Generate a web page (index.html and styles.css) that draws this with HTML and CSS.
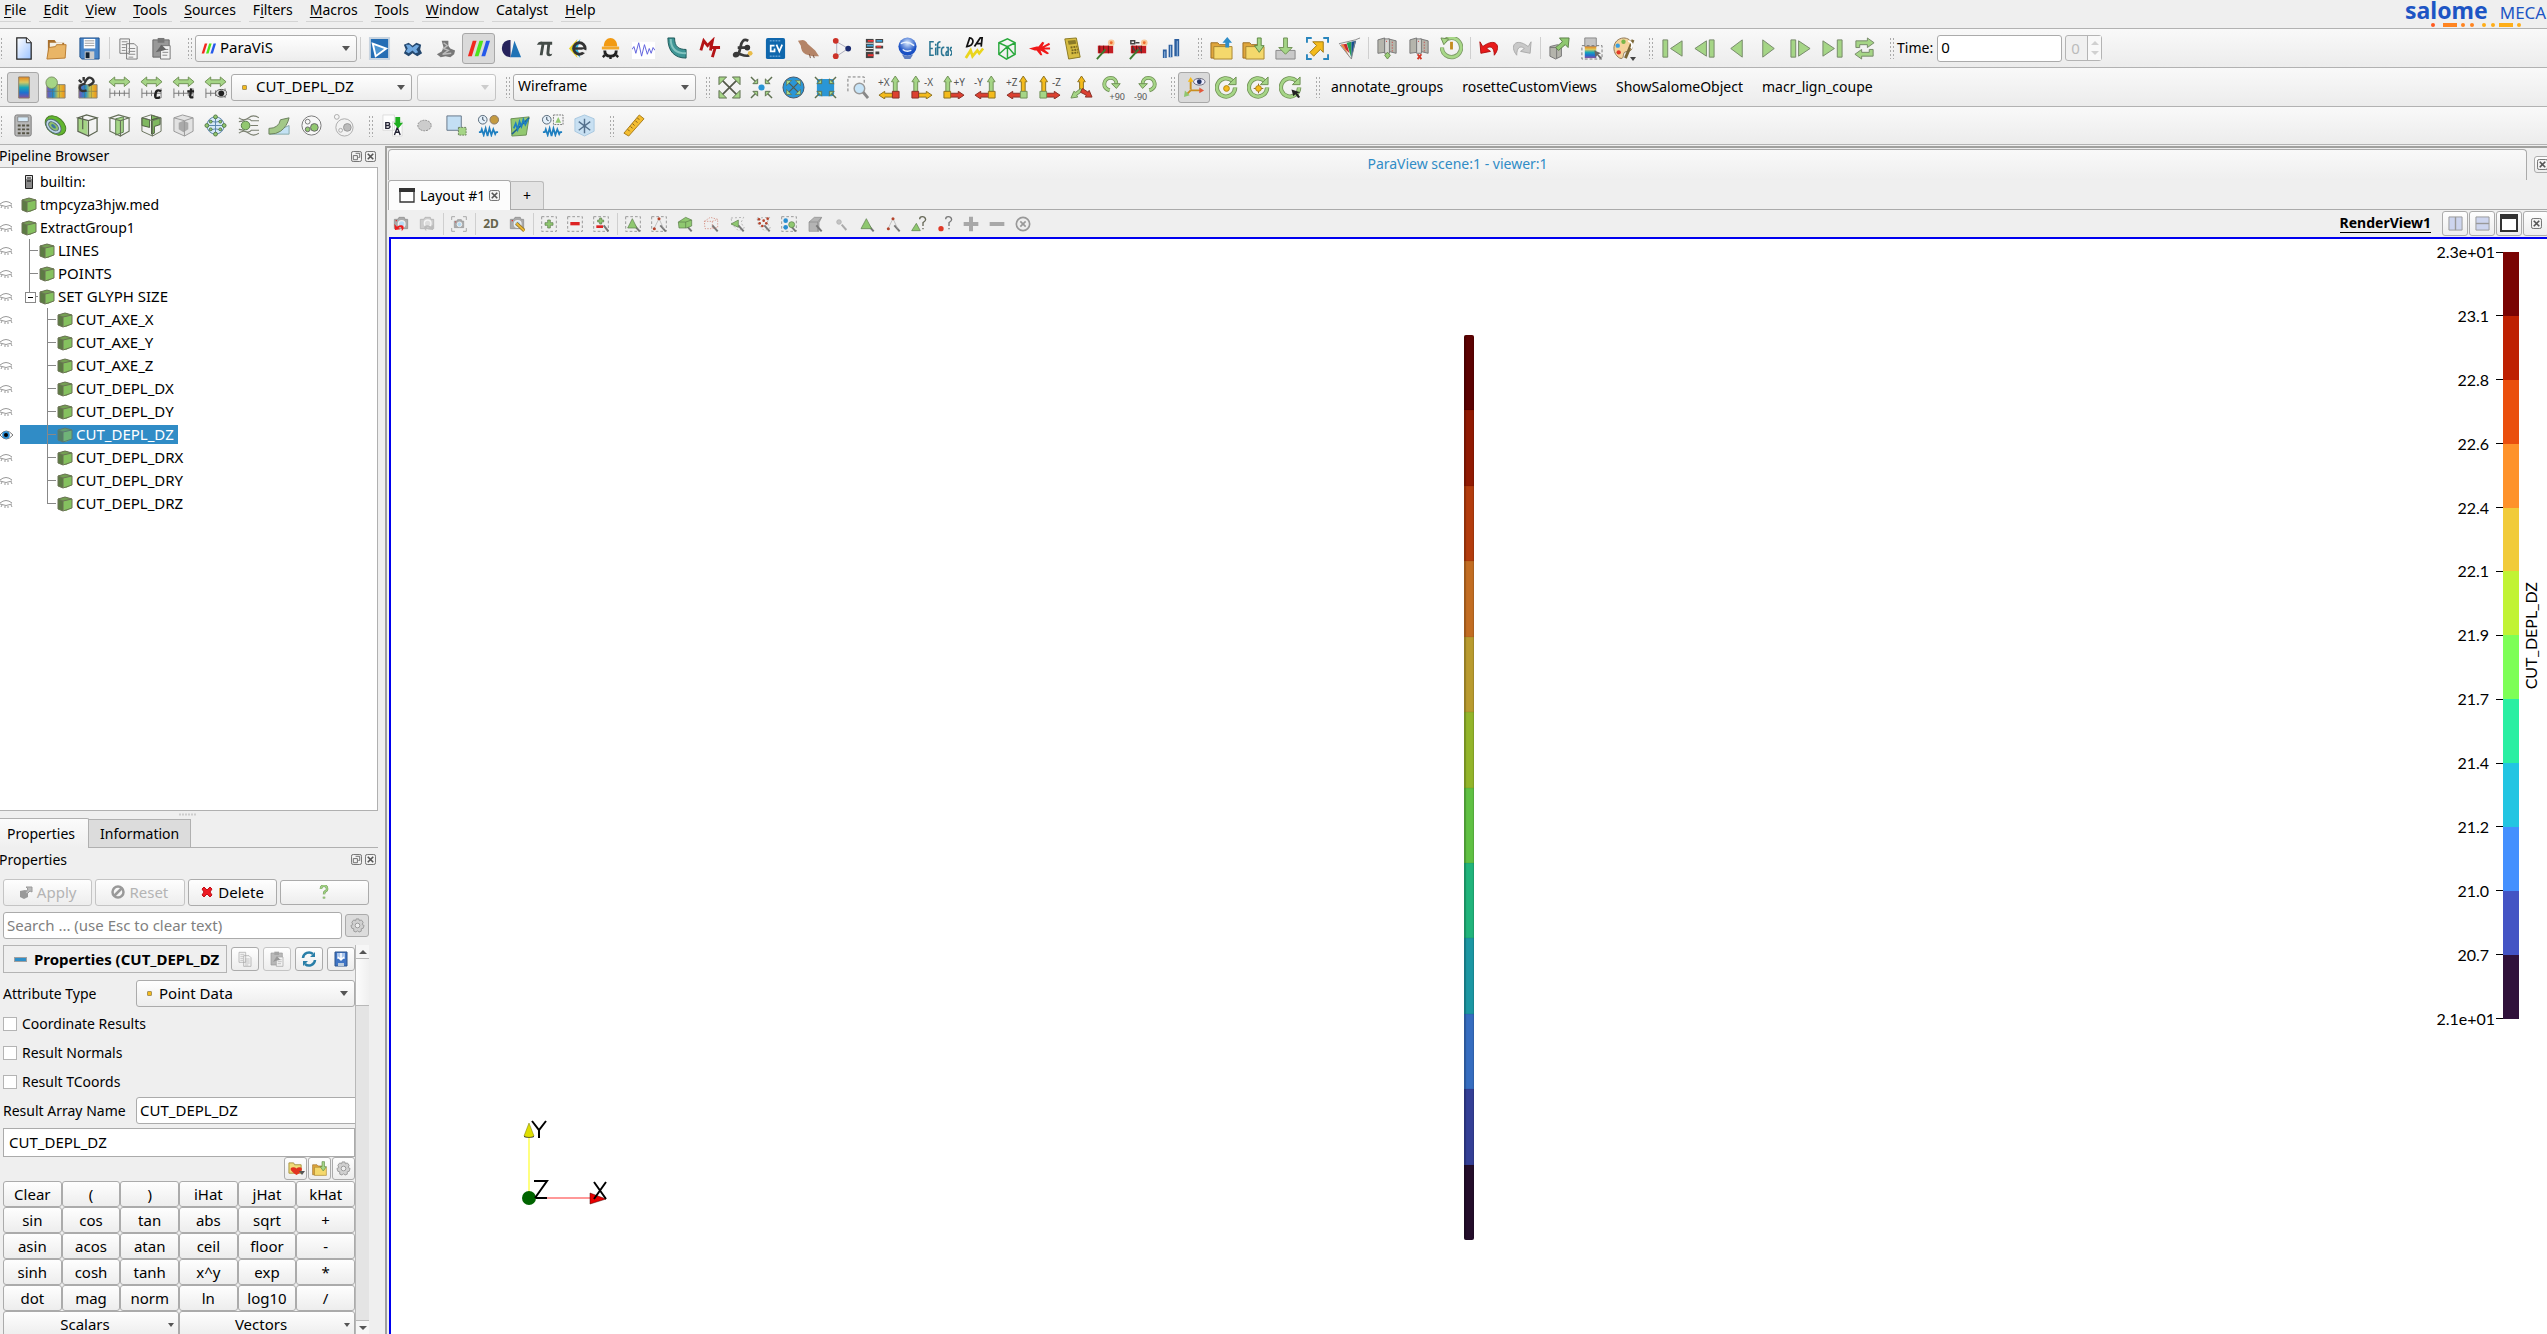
FILE: index.html
```html
<!DOCTYPE html>
<html lang="en">
<head>
<meta charset="utf-8">
<title>SALOME MECA - ParaViS</title>
<link rel="stylesheet" href="styles.css">
</head>
<body>
<svg class="defs" aria-hidden="true">
<defs>
<linearGradient id="rain" x1="0" y1="0" x2="0" y2="1"><stop offset="0" stop-color="#e8861c"/><stop offset=".25" stop-color="#d8c860"/><stop offset=".5" stop-color="#18a8b8"/><stop offset=".75" stop-color="#1f6fd0"/><stop offset="1" stop-color="#8a4f9c"/></linearGradient>
<linearGradient id="rainh"><stop offset="0" stop-color="#7b55b0"/><stop offset=".35" stop-color="#1c8fd0"/><stop offset=".65" stop-color="#d8c840"/><stop offset="1" stop-color="#f09018"/></linearGradient>
<linearGradient id="sheet" x1="0" y1="0" x2="1" y2="1"><stop offset="0" stop-color="#fff"/><stop offset="1" stop-color="#9cc3ff"/></linearGradient>
<radialGradient id="ball" cx=".5" cy=".3"><stop offset="0" stop-color="#dcecff"/><stop offset="1" stop-color="#1b51c4"/></radialGradient>
<symbol id="new" viewBox="0 0 24 24"><path d="M5 1h10l5 5v17H5z" fill="url(#sheet)" stroke="#222" stroke-width="1.3"/><path d="M15 1v5h5" fill="#fff" stroke="#222"/></symbol>
<symbol id="open" viewBox="0 0 24 24"><path d="M3 3h7l2 3h8v15H3z" fill="#a86f2c"/><path d="M5 6h13v6H5z" fill="#f4f0e6"/><path d="M2 23 4 11l7-1 1-2h10l-1 14z" fill="#e9b566" stroke="#b87b30"/></symbol>
<symbol id="save" viewBox="0 0 24 24"><path d="M2 1h20v22H4l-2-2z" fill="#4a86c8" stroke="#1d4f8c"/><path d="M6 2h12v10H6z" fill="#fff"/><path d="M7 4h10M7 6.500h10M7 9h10" stroke="#999"/><path d="M7 15h10v8H7z" fill="#ccc"/><path d="M8 16h4v6H8z" fill="#123"/></symbol>
<symbol id="copy" viewBox="0 0 24 24"><path d="M3 2h10v15H3zM10 7h8l3 3v13H10z" fill="#f4f4f4" stroke="#777"/><path d="M5 5h6M5 8h5M5 11h4M5 14h4M12 12h7M12 15h7M12 18h7M12 21h5" stroke="#888"/></symbol>
<symbol id="paste" viewBox="0 0 24 24"><path d="M3 3h17v18H3z" fill="#999" stroke="#666"/><path d="M8 1h7v5H8z" fill="#777"/><path d="M11 9h10v14H11z" fill="#f2f2f2" stroke="#777"/><path d="M13 13h6M13 16h6M13 19h5" stroke="#888"/><path d="m6 16 6-8 5 5-3 1z" fill="#666"/></symbol>
<symbol id="pv" viewBox="0 0 24 24"><path d="M6 4h4L5 20H1z" fill="#f2281e"/><path d="M13 4h4l-5 16H8z" fill="#4ee41c"/><path d="M20 4h4l-5 16h-4z" fill="#2459ea"/></symbol>
<symbol id="shaper" viewBox="0 0 24 24"><path d="M2 1h20v22H2z" fill="#246db4" stroke="#c8d4e0" stroke-width="2"/><path d="m5 7 14 5-11 8z" fill="#4c94d0" stroke="#fff" stroke-width="2"/></symbol>
<symbol id="geom" viewBox="0 0 24 24"><path d="m3 8 5-2 4 3 4-3 5 2-1 5 2 4-5 3-5-3-4 3-5-3 2-4z" fill="#24486f"/><path d="m5 8 4 0 3 3 4-3 3 1-3 4 2 3-3 1-3-3-4 3-3-2 2-3z" fill="#71a9e0"/></symbol>
<symbol id="mesh" viewBox="0 0 24 24"><path d="M8 4h7v5l2 3 5 2-1 4-4 3-5-1-5 1-4-3 5-3 2-4z" fill="#777"/><path d="m10 6 4 3-4 3 5 2-6 4 9-1" fill="none" stroke="#bbb" stroke-width="1.500"/></symbol>
<symbol id="adao" viewBox="0 0 24 24"><path d="M11 3C4 3 2 8 2 12s3 9 9 9z" fill="#26235c"/><path d="m15 4 7 17H11z" fill="#1f72b6"/></symbol>
<symbol id="pi" viewBox="0 0 24 24"><path d="M4 8q2-4 6-3h10v3H4zM9 7h3l-2 12H7zM15 7h3l-1 10q2 2 3 0 0 3-3 3-3 0-3-3z" fill="#444c48"/></symbol>
<symbol id="eicon" viewBox="0 0 24 24"><path d="M12 2 3 12l9 10-3-10z" fill="#e8d424"/><path d="M15 2 6 12l9 10-3-10z" fill="#2fb4dc"/><circle cx="14" cy="12" r="6" fill="none" stroke="#333" stroke-width="3"/><path d="M9 12h10" stroke="#333" stroke-width="2.500"/><path d="m17 14 5 2" stroke="#eee" stroke-width="3"/></symbol>
<symbol id="helmet" viewBox="0 0 24 24"><path d="M5 10c0-12 14-12 14 0z" fill="#f29a12"/><path d="M3 10h18v3H3z" fill="#f2a72a"/><path d="M6 14q0 6 6 6t6-6" fill="none" stroke="#222" stroke-width="3"/><path d="M12 20v3M6 19l-2 2M18 19l2 2" stroke="#222" stroke-width="2.500"/></symbol>
<symbol id="wave" viewBox="0 0 24 24"><path d="M0 5h24v18H0z" fill="#fff"/><path d="M0 13l2-3 2 7 3-11 3 14 3-12 3 10 2-6 2 5 2-6 2 3" fill="none" stroke="#5d5fdc"/></symbol>
<symbol id="pipe" viewBox="0 0 24 24"><path d="M3 1h7c0 9 4 12 12 12v9C10 22 3 15 3 1z" fill="#3f9696" stroke="#1c5758"/><path d="M6 2c0 10 6 15 16 15" fill="none" stroke="#83c4c0" stroke-width="2"/></symbol>
<symbol id="mt" viewBox="0 0 24 24"><path d="M3 14 6 4l4 5 5-5-2 10M12 11h11M18 11l-3 10" fill="none" stroke="#b41316" stroke-width="3"/></symbol>
<symbol id="lscript" viewBox="0 0 24 24"><path d="M18 4c-5-3-7 1-8 6s-2 10-5 10-2-4 2-3 8 4 12 2M7 11h8" fill="none" stroke="#3a3a3a" stroke-width="2.800"/><circle cx="17" cy="11" r="3" fill="#333"/><circle cx="20" cy="17" r="2.500" fill="#e9bc4a"/></symbol>
<symbol id="gv" viewBox="0 0 24 24"><rect x="2" y="1" width="20" height="22" rx="2" fill="#0f67ad"/><path d="M11 9H7v6h4v-3M13 8l3 7 3-7" fill="none" stroke="#fff" stroke-width="1.800"/><path d="M6 4h12M6 20h12" stroke="#8fc0e8" stroke-dasharray="2 1"/></symbol>
<symbol id="bird" viewBox="0 0 24 24"><path d="m1 4 5-1q4 1 5 4l8 7 4 6h-7l-7-2q-5-3-5-9z" fill="#b48467"/><path d="m13 18 1 4M17 19l1 3" stroke="#76513d"/></symbol>
<symbol id="graph" viewBox="0 0 24 24"><path d="m7 5 12 7-12 8M7 5v15" fill="none" stroke="#aab"/><circle cx="6" cy="4" r="3" fill="#cc3228"/><circle cx="6" cy="20" r="3" fill="#cc3228"/><circle cx="19" cy="12" r="3" fill="#1c2c70"/></symbol>
<symbol id="blocks" viewBox="0 0 24 24"><path d="M3 2h8v20H3z" fill="#444"/><path d="M13 2h8v4h-8zM13 9h8v3h-8zM13 15h4v3h-4z" fill="#444"/><path d="M5 4h6M5 19h6M14 10h5" stroke="#e33" stroke-width="2"/><path d="M4 9h7M14 4h6" stroke="#3aa6dd" stroke-width="2"/><path d="M3 6.500h8M3 12h8M3 15h8" stroke="#eee"/></symbol>
<symbol id="sphere" viewBox="0 0 24 24"><circle cx="12" cy="10" r="9.500" fill="url(#ball)"/><path d="m6 18 3 5h6l3-5q-6 3-12 0z" fill="#5e7ec0"/><path d="M5 7q7-4 14 2M7 13q4 3 9 1" fill="none" stroke="#eaf3ff" stroke-width="1.500"/></symbol>
<symbol id="eficas" viewBox="0 0 24 24"><path d="M5 5H1v14h4M1 12h3M7 19v-8M7 7v2M9 19V8q0-3 3-3M8 11h4M16 11q-3-1-3 4t3 4M18 11h2v8h-2q-1-4 2-4M24 11h-1q-2 3 1 4 0 4-2 4" fill="none" stroke="#2a7592" stroke-width="1.600"/></symbol>
<symbol id="da" viewBox="0 0 24 24"><path d="m5 10 3-9c5 0 5 8-3 9zM13 10l6-9h2l-1 9M15 7h5" fill="none" stroke="#111" stroke-width="1.800"/><path d="m4 22 5-8 2 6 5-6 2 3 4-5" fill="none" stroke="#ead51c" stroke-width="2.800"/></symbol>
<symbol id="gcube" viewBox="0 0 24 24"><path d="m4 6 9-4 8 4v12l-9 5-8-5zM4 6l9 4 8-4M13 10v13M4 18l9-8 7 8" fill="none" stroke="#27a83a" stroke-width="1.500"/></symbol>
<symbol id="lobster" viewBox="0 0 24 24"><path d="m1 12 8-2 2 0 4-5 2 1-2 4 7-4 1 2-6 3 6 0v2l-6 0 5 4-2 1-7-4 2 5-2 0-4-5-2 0z" fill="#f01818"/></symbol>
<symbol id="goldcalc" viewBox="0 0 24 24"><path d="m4 2 12-1 4 20-12 2z" fill="#d6bc42" stroke="#8a7820"/><path d="m7 4 8-1 1 4-8 1z" fill="#8a7a28"/><path d="m10 11 7-1M11 14l7-1M11 17l7-1" stroke="#75651e" stroke-width="2" stroke-dasharray="2 1"/></symbol>
<symbol id="redtool" viewBox="0 0 24 24"><path d="M4 9h16v8H4z" fill="#c41e24"/><path d="M6 9v8M10 9v8M15 9v8" stroke="#6c1010"/><path d="m3 23 9-10" stroke="#3c7a2e" stroke-width="2"/><circle cx="18" cy="6" r="3.500" fill="#f8c898"/><circle cx="18" cy="6" r="1.500" fill="#f06a2c"/></symbol>
<symbol id="redtool2" viewBox="0 0 24 24"><use href="#redtool"/><path d="M4 4h4v3H4zM9 6h4M6 11l3 4M12 10l3 5" fill="none" stroke="#444" stroke-width="1.500"/></symbol>
<symbol id="bars" viewBox="0 0 24 24"><path d="M3 13h4v9H3zM9 8h4v13H9zM15 2h5v18h-5z" fill="#2c5f9f"/><path d="M5 22v-7M11 21V9M18 20V4" stroke="#9ec0e6"/></symbol>
<symbol id="folderup" viewBox="0 0 24 24"><path d="M1 6h7l2 2h9v14H1z" fill="#e0a63c" stroke="#9a6c20"/><path d="M4 10h19v13H4z" fill="#f4d86c" stroke="#a88430"/><path d="m18 0 5 6h-3v5h-4V6h-3z" fill="#2f8dc8"/></symbol>
<symbol id="folderdn" viewBox="0 0 24 24"><path d="M1 6h7l2 2h9v14H1z" fill="#e0a63c" stroke="#9a6c20"/><path d="M4 10h19v13H4z" fill="#f4d86c" stroke="#a88430"/><path d="M16 1h4v8h3l-5 7-5-7h3z" fill="#a5d586" stroke="#5d8844"/></symbol>
<symbol id="savedn" viewBox="0 0 24 24"><path d="M2 14h20v9H2z" fill="#c9c9c9" stroke="#888"/><path d="M10 1h4v10h5l-7 7-7-7h5z" fill="#a5d586" stroke="#6f8f55"/></symbol>
<symbol id="expand" viewBox="0 0 24 24"><path d="M1 6V1h5M18 1h5v5M23 18v5h-5M6 23H1v-5" fill="none" stroke="#2a86bd" stroke-width="2"/><path d="m7 5 11 0 0 11-3-3-7 7-4-4 7-7z" fill="#f4bb1c" stroke="#a07810"/></symbol>
<symbol id="vcr" viewBox="0 0 24 24"><path d="m3 8 6-1 3 10z" fill="#c82832"/><path d="m3 8 3 0 6 13z" fill="#e84"/><path d="m9 6 5-1v17z" fill="#27a052"/><path d="m14 5 5-1-5 18z" fill="#174f8f"/><path d="m1 7 17-4 5-2M18 4l-4 19L2 8" fill="none" stroke="#888"/></symbol>
<symbol id="server" viewBox="0 0 24 24"><path d="m2 3 7-2v15l-7 1zM13 2l8 2v13l-8-2z" fill="#b5b5ac" stroke="#777"/><path d="M9 2h5v15H9z" fill="#d8d8d4" stroke="#777"/><path d="M17 5v11M11 4v2" stroke="#c33" stroke-dasharray="1 2"/></symbol>
<symbol id="connect" viewBox="0 0 24 24"><use href="#server"/><path d="m12 16 3 3-3 4-3-4z" fill="#9bce7a" stroke="#688e4e"/></symbol>
<symbol id="disconnect" viewBox="0 0 24 24"><use href="#server"/><path d="m10 18 4 5m0-5-4 5" stroke="#d43a2a" stroke-width="2"/></symbol>
<symbol id="clockg" viewBox="0 0 24 24"><path d="M4 5a10 10 0 1 1-2 6" fill="none" stroke="#7e9b68" stroke-width="4.500"/><path d="M4 5a10 10 0 1 1-2 6" fill="none" stroke="#a8d888" stroke-width="2.800"/><path d="m1 1 8 1-5 6z" fill="#a8d888" stroke="#6f8f55"/><path d="M12 5v8" stroke="#c48c20" stroke-width="3"/></symbol>
<symbol id="undo" viewBox="0 0 24 24"><path d="m2 5 1 12 10-2-4-3c5-4 8 0 8 7 8-10 1-19-12-9z" fill="#e81a1a" stroke="#b01010"/></symbol>
<symbol id="redo" viewBox="0 0 24 24"><path d="m22 5-1 12-10-2 4-3c-5-4-8 0-8 7C-1 9 6 0 19 10z" fill="#c9c9c9" stroke="#aaa"/></symbol>
<symbol id="gcubearrow" viewBox="0 0 24 24"><path d="m2 10 8-2 4 2v10l-6 3-6-3z" fill="#b4b4ac" stroke="#777"/><path d="M2 11h7v11M9 12l5-2" fill="none" stroke="#777"/><path d="M12 1h10l-1 10-3-3-7 6-3-3 7-6z" fill="#8fc870" stroke="#5c7e48"/></symbol>
<symbol id="cmapsel" viewBox="0 0 24 24"><path d="M5 1h12v9H5z" fill="#c4c4c4" stroke="#888"/><path d="M5 10h12v12H5z" fill="url(#rain)"/><path d="M2 9h21v14H2z" fill="none" stroke="#777" stroke-dasharray="3 2"/><path d="m15 14 7 3-3 1 4 4-2 1-3-4-2 2z" fill="#666"/></symbol>
<symbol id="palette" viewBox="0 0 24 24"><path d="M12 1C0 2-1 17 8 22c5 2 3-4 5-6 4-2 8 0 8-6 0-7-5-9-9-9z" fill="#f5d39b" stroke="#8a7350"/><circle cx="6" cy="9" r="2.300" fill="#3a9fe0"/><circle cx="12" cy="5" r="2.300" fill="#7ab648"/><circle cx="7" cy="16" r="2.300" fill="#e23a28"/><path d="m22 3-8 19" stroke="#7b6636" stroke-width="3"/><path d="M17 4q6 2 3 8" fill="none" stroke="#fff" stroke-width="2"/></symbol>
<symbol id="first" viewBox="0 0 24 24"><path d="M2 3h5v18H2zM22 4v16L10 12z" fill="#a5d586" stroke="#758868"/></symbol>
<symbol id="prev" viewBox="0 0 24 24"><path d="M17 3h5v18h-5zM14 4v16L2 12z" fill="#a5d586" stroke="#758868"/></symbol>
<symbol id="rev" viewBox="0 0 24 24"><path d="M18 3v18L6 12z" fill="#a5d586" stroke="#758868"/></symbol>
<symbol id="play" viewBox="0 0 24 24"><path d="M6 3v18l12-9z" fill="#a5d586" stroke="#758868"/></symbol>
<symbol id="next" viewBox="0 0 24 24"><path d="M2 3h5v18H2zM10 4v16l12-8z" fill="#a5d586" stroke="#758868"/></symbol>
<symbol id="last" viewBox="0 0 24 24"><path d="M17 3h5v18h-5zM2 4v16l12-8z" fill="#a5d586" stroke="#758868"/></symbol>
<symbol id="loop" viewBox="0 0 24 24"><path d="M3 11V4h12V1l7 5-7 5V8H7v3zM21 13v7H9v3l-7-5 7-5v3h8v-3z" fill="#a5d586" stroke="#758868"/></symbol>
<symbol id="cbar" viewBox="0 0 24 24"><path d="M7 1h11v22H7z" fill="url(#rain)" stroke="#8c7a60"/></symbol>
<symbol id="grad" viewBox="0 0 24 24"><path d="M3 9h19v14H3z" fill="url(#rainh)" stroke="#887"/><path d="M3 16h19M9 9v14M16 9v14" stroke="#665" opacity=".5"/></symbol>
<symbol id="cedit" viewBox="0 0 24 24"><use href="#grad"/><circle cx="8" cy="7" r="6" fill="#a5d586" stroke="#789060"/></symbol>
<symbol id="cunlink" viewBox="0 0 24 24"><use href="#grad"/><path d="M9 7q4-8 8-4t-4 7M10 8q-7 1-6 5t7 2M3 4l3 3M8 1v4" fill="none" stroke="#333" stroke-width="2.500"/></symbol>
<symbol id="rng" viewBox="0 0 24 24"><path d="m1 6 6-5v3h10V1l6 5-6 5V8H7v3z" fill="#a5d586" stroke="#6f8f55"/><path d="M2 13v10M7 15v6M12 15v6M17 15v6M22 13v10M2 18h20" stroke="#777"/></symbol>
<symbol id="rngc" viewBox="0 0 24 24"><use href="#rng"/><path d="M22 16q-5-3-6 3t5 3" fill="none" stroke="#222" stroke-width="2.500"/></symbol>
<symbol id="rngt" viewBox="0 0 24 24"><use href="#rng"/><path d="m20 13-1 8q0 2 3 1M16 16h7" fill="none" stroke="#222" stroke-width="2.500"/></symbol>
<symbol id="rnge" viewBox="0 0 24 24"><use href="#rng"/><ellipse cx="18" cy="18" rx="6" ry="4" fill="#ddd" stroke="#555"/><circle cx="18" cy="18" r="3" fill="#222"/></symbol>
<symbol id="zoomall" viewBox="0 0 24 24"><path d="m4 4 16 16M20 4 4 20" stroke="#555a4c" stroke-width="1.800"/><path d="M1 1h8L1 9zM23 1v8l-8-8zM1 23v-8l8 8zM23 23h-8l8-8z" fill="#a5d586" stroke="#5e7050"/></symbol>
<symbol id="inarr" viewBox="0 0 24 24"><path d="m1 1 5 5M23 1l-5 5M1 23l5-5M23 23l-5-5" stroke="#5e7050" stroke-width="1.500"/><path d="M8 8H3l5-5zM16 8V3l5 5zM8 16v5l-5-5zM16 16h5l-5 5z" fill="#a5d586" stroke="#5e7050"/></symbol>
<symbol id="zoomdata" viewBox="0 0 24 24"><use href="#inarr"/><circle cx="12" cy="12" r="3.200" fill="#2a96d6"/></symbol>
<symbol id="zoomcirc" viewBox="0 0 24 24"><circle cx="12" cy="12" r="11" fill="#2a96d6" stroke="#456"/><svg x="4" y="4" width="16" height="16"><use href="#zoomall"/></svg></symbol>
<symbol id="zoomsq" viewBox="0 0 24 24"><rect x="3" y="3" width="18" height="18" rx="3" fill="#2a96d6"/><use href="#inarr"/></symbol>
<symbol id="zoombox" viewBox="0 0 24 24"><path d="M2 16V1h17v6" fill="none" stroke="#777" stroke-dasharray="3 2"/><circle cx="14" cy="13" r="5.500" fill="#c6e4f8" stroke="#999" stroke-width="1.500"/><path d="m18 17 5 6" stroke="#888" stroke-width="3"/></symbol>
<symbol id="upL" viewBox="0 0 24 24"><path d="m18 0 4 6h-2v11h-4V6h-2z" fill="#a5d586" stroke="#6f8f55"/><path d="m1 20 6-4v2h9v4H7v2z" fill="#f4bb1c" stroke="#8a7020"/><path d="M15 16h7v7h-7z" fill="#dc4030" stroke="#863028"/></symbol>
<symbol id="upR" viewBox="0 0 24 24"><path d="m6 0 4 6H8v11H4V6H2z" fill="#a5d586" stroke="#6f8f55"/><path d="m23 20-6-4v2H8v4h9v2z" fill="#f4bb1c" stroke="#8a7020"/><path d="M2 16h7v7H2z" fill="#dc4030" stroke="#863028"/></symbol>
<symbol id="upRy" viewBox="0 0 24 24"><path d="m6 0 4 6H8v11H4V6H2z" fill="#a5d586" stroke="#6f8f55"/><path d="m23 20-6-4v2H8v4h9v2z" fill="#dc4030" stroke="#863028"/><path d="M2 16h7v7H2z" fill="#f4bb1c" stroke="#8a7020"/></symbol>
<symbol id="upLy" viewBox="0 0 24 24"><path d="m18 0 4 6h-2v11h-4V6h-2z" fill="#a5d586" stroke="#6f8f55"/><path d="m1 20 6-4v2h9v4H7v2z" fill="#dc4030" stroke="#863028"/><path d="M15 16h7v7h-7z" fill="#f4bb1c" stroke="#8a7020"/></symbol>
<symbol id="upLz" viewBox="0 0 24 24"><path d="m18 0 4 6h-2v11h-4V6h-2z" fill="#f4bb1c" stroke="#8a7020"/><path d="m1 20 6-4v2h9v4H7v2z" fill="#dc4030" stroke="#863028"/><path d="M15 16h7v7h-7z" fill="#a5d586" stroke="#6f8f55"/></symbol>
<symbol id="upRz" viewBox="0 0 24 24"><path d="m6 0 4 6H8v11H4V6H2z" fill="#f4bb1c" stroke="#8a7020"/><path d="m23 20-6-4v2H8v4h9v2z" fill="#dc4030" stroke="#863028"/><path d="M2 16h7v7H2z" fill="#a5d586" stroke="#6f8f55"/></symbol>
<symbol id="iso" viewBox="0 0 24 24"><path d="m12 0 4 6h-2v8h-4V6H8z" fill="#f4bb1c" stroke="#8a7020"/><path d="m11 13 2 3-6 4 1 2-7 1 3-7 2 1z" fill="#a5d586" stroke="#6f8f55"/><path d="m13 13 6 4 1-2 3 7-7 0 1-2-6-3z" fill="#dc4030" stroke="#863028"/></symbol>
<symbol id="rotp" viewBox="0 0 24 24"><path d="M8 15C-1 12 2 2 9 2c4 0 6 3 6 6" fill="none" stroke="#6f8f55" stroke-width="4"/><path d="M8 15C-1 12 2 2 9 2c4 0 6 3 6 6" fill="none" stroke="#a5d586" stroke-width="2.500"/><path d="M10 8h9l-4 5z" fill="#a5d586" stroke="#6f8f55"/></symbol>
<symbol id="rotm" viewBox="0 0 24 24"><path d="M16 15c9-3 6-13-1-13-4 0-6 3-6 6" fill="none" stroke="#6f8f55" stroke-width="4"/><path d="M16 15c9-3 6-13-1-13-4 0-6 3-6 6" fill="none" stroke="#a5d586" stroke-width="2.500"/><path d="M14 8H5l4 5z" fill="#a5d586" stroke="#6f8f55"/></symbol>
<symbol id="axesv" viewBox="0 0 24 24"><path d="M8 14V4M8 15h10M8 15l-5 5" stroke="#c98f20" stroke-width="2"/><path d="m8 1 3 5H5z" fill="#f4bb1c"/><path d="m22 15-5-3v6z" fill="#e3573b"/><path d="m1 22 1-7 5 5z" fill="#8fc66e"/><ellipse cx="17" cy="6" rx="6" ry="3.500" fill="#eef" stroke="#667"/><circle cx="17" cy="6" r="2.500" fill="#236"/></symbol>
<symbol id="rotc" viewBox="0 0 24 24"><path d="M18 5a9.500 9.500 0 1 0 3 7" fill="none" stroke="#6f8f55" stroke-width="4.500"/><path d="M18 5a9.500 9.500 0 1 0 3 7" fill="none" stroke="#a5d586" stroke-width="2.800"/><path d="m22 1v8h-8z" fill="#a5d586" stroke="#6f8f55"/></symbol>
<symbol id="rot1" viewBox="0 0 24 24"><use href="#rotc"/><circle cx="12" cy="13" r="3" fill="#f4bb1c" stroke="#b08418"/></symbol>
<symbol id="rot2" viewBox="0 0 24 24"><use href="#rot1"/><path d="M12 8v2M12 16v2M7 13h2M15 13h2" stroke="#8a6b1c"/></symbol>
<symbol id="rot3" viewBox="0 0 24 24"><use href="#rotc"/><path d="m13 14 9 3-3 1 3 4-2 1-3-4-2 2z" fill="#222"/></symbol>
<symbol id="calc" viewBox="0 0 24 24"><rect x="3" y="1" width="17" height="22" rx="2" fill="#b8b8b8" stroke="#777"/><path d="M6 3h11v5H6z" fill="#d8ecfa" stroke="#888"/><path d="M6 12h12M6 16h12M6 20h12" stroke="#555344" stroke-width="2" stroke-dasharray="3 1.500"/></symbol>
<symbol id="contour" viewBox="0 0 24 24"><g transform="rotate(40 12 12)"><ellipse cx="12" cy="12" rx="12" ry="8.500" fill="#62b62e" stroke="#4a7c28"/><ellipse cx="11" cy="14" rx="9" ry="6" fill="#bcd8ea" stroke="#567"/><ellipse cx="11" cy="14" rx="6" ry="3.500" fill="#8cbf6a" stroke="#567"/><ellipse cx="11" cy="14" rx="3" ry="1.500" fill="#3e78a0"/></g></symbol>
<symbol id="clip" viewBox="0 0 24 24"><path d="m2 4 10 3v15L2 18z" fill="#a5d586"/><path d="m2 4 9-3 11 3-9 3zM2 4v14l11 5V7M22 4v14l-9 5M7 2v14" fill="none" stroke="#5b6450" stroke-width="1.300"/></symbol>
<symbol id="slice" viewBox="0 0 24 24"><path d="m8 5 8-2v16l-8 3z" fill="#a5d586" stroke="#5b8050"/><path d="m2 4 9-3 11 3-9 3zM2 4v14l11 5V7M22 4v14l-9 5" fill="none" stroke="#66705a" stroke-width="1.200"/></symbol>
<symbol id="thresh" viewBox="0 0 24 24"><path d="m2 4 8 2v8l-8-2zM12 6l9-2v7l-6 2v7l-3 1zM12 1l8 3-8 2z" fill="#7fb860" stroke="#4c5c40"/><path d="m2 4 9-3 11 3-9 3zM2 4v14l11 5V7M22 4v14l-9 5" fill="none" stroke="#66705a"/></symbol>
<symbol id="gcube2" viewBox="0 0 24 24"><path d="m2 4 9-3 11 3v14l-9 5-11-5z" fill="#e2e2e2" stroke="#999"/><path d="m7 9 5-2 5 2v7l-5 3-5-3z" fill="#aaa"/><path d="m2 4 11 3 9-3M13 7v16" fill="none" stroke="#999"/></symbol>
<symbol id="glyph" viewBox="0 0 24 24"><circle cx="12" cy="12" r="9" fill="#d5e8f8" stroke="#567ea8"/><path d="M12 2v20M2 12h20M5 7q7 3 14 0M5 17q7-3 14 0" fill="none" stroke="#5a86ac"/><g fill="#92c870" stroke="#557a48"><circle cx="12" cy="3" r="2"/><circle cx="12" cy="21" r="2"/><circle cx="3" cy="12" r="2"/><circle cx="21" cy="12" r="2"/><circle cx="7" cy="8" r="1.500"/><circle cx="17" cy="8" r="1.500"/><circle cx="7" cy="16" r="1.500"/><circle cx="17" cy="16" r="1.500"/></g></symbol>
<symbol id="stream" viewBox="0 0 24 24"><path d="M3 4q5 4 10 0t11 0M3 8q4 0 6-2 5-2 7 1h8M3 20q5-4 10 0t11 0M3 16q4 0 6 2 5 2 7-1h8M15 12h8" fill="none" stroke="#7a7f70" stroke-width="1.200"/><circle cx="10" cy="12" r="4.500" fill="#92c870" stroke="#557a48"/></symbol>
<symbol id="warp" viewBox="0 0 24 24"><path d="M2 21h20v-9z" fill="#c4e2f4" stroke="#8aa"/><path d="M1 15q10 0 12-9l9-2q-2 9-9 14-4 3-12 3z" fill="#a3c888" stroke="#6a7e5c"/></symbol>
<symbol id="group" viewBox="0 0 24 24"><circle cx="12" cy="12" r="10" fill="#f7f7f7" stroke="#777"/><circle cx="8" cy="8" r="2.500" fill="none" stroke="#777"/><circle cx="15" cy="14" r="4" fill="#92c870" stroke="#666"/><circle cx="8" cy="16" r="2.500" fill="#92c870" stroke="#666"/></symbol>
<symbol id="level" viewBox="0 0 24 24"><circle cx="13" cy="14" r="9" fill="#f2f2f2" stroke="#aaa"/><circle cx="5" cy="3" r="2.500" fill="none" stroke="#aaa"/><circle cx="16" cy="14" r="4" fill="#bbb" stroke="#999"/><circle cx="9" cy="17" r="2" fill="none" stroke="#aaa"/></symbol>
<symbol id="ba" viewBox="0 0 24 24"><path d="M2 1h12v16H2zM12 8h10v15H12z" fill="#fdfdfd" stroke="#ddd"/><path d="M5 9h3q2 1 0 3 3 1 0 3H5zM5 12h3M14 22l3-8 3 8M15 19h4" fill="none" stroke="#223" stroke-width="1.400"/><path d="M15 3h5v6h3l-5 6-5-6h2z" fill="#1fae20"/></symbol>
<symbol id="ell" viewBox="0 0 24 24"><ellipse cx="12" cy="12" rx="7" ry="5.500" fill="#ccc" stroke="#888" stroke-dasharray="2 1"/></symbol>
<symbol id="squares" viewBox="0 0 24 24"><path d="M2 2h15v15H2z" fill="#c3dff4" stroke="#678"/><path d="M14 14h8v8h-8z" fill="#a5d586" stroke="#6a7e5c" stroke-dasharray="2 1"/></symbol>
<symbol id="sig" viewBox="0 0 24 24"><path d="M2 19h2l1-3 2 6 2-7 2 8 2-8 2 7 2-6 2 5 1-2h2" fill="none" stroke="#1e7fc0" stroke-width="1.800"/></symbol>
<symbol id="tplot" viewBox="0 0 24 24"><circle cx="6" cy="6" r="4.500" fill="#e4f0fa" stroke="#567"/><path d="M6 3v3l2 1" fill="none" stroke="#345"/><circle cx="18" cy="6" r="4.500" fill="#c49a40" stroke="#876"/><use href="#sig"/></symbol>
<symbol id="tplot2" viewBox="0 0 24 24"><circle cx="6" cy="6" r="4.500" fill="#e4f0fa" stroke="#567"/><path d="M6 3v3l2 1" fill="none" stroke="#345"/><path d="m18 3 3 6h-6z" fill="#92c870"/><path d="M13 1h10v10H13z" fill="none" stroke="#777" stroke-dasharray="2 1"/><use href="#sig"/></symbol>
<symbol id="pline" viewBox="0 0 24 24"><path d="m2 5 19-2-3 19-15 1z" fill="#92c870" stroke="#6b8f55"/><path d="M3 21 21 4" stroke="#1e5f90" stroke-width="1.500"/><path d="m5 15 2-5 2 6 2-8 2 5 2-7 2 5 3-6" fill="none" stroke="#1e7fc0" stroke-width="1.800"/></symbol>
<symbol id="frost" viewBox="0 0 24 24"><path d="m2 5 10-4 10 4v13l-10 5-10-5z" fill="#c8e0f2" stroke="#a8c8e0"/><path d="M12 5v15M6 8l12 9M18 8 6 17" stroke="#54708c" stroke-width="1.500"/></symbol>
<symbol id="ruler" viewBox="0 0 24 24"><path d="m2 20 16-19 5 4L7 23z" fill="#f4bd30" stroke="#a87b18"/><path d="m6 16 2 2M9 13l2 2M11 10l2 2M14 7l2 2M16 4l2 2" stroke="#765818"/></symbol>
<symbol id="cam" viewBox="0 0 24 24"><path d="M2 5h5l2-3h8l1 3h4v14H2z" fill="#aaa" stroke="#888"/><circle cx="13" cy="12" r="5" fill="#b8dcf4" stroke="#eee" stroke-width="2"/><path d="M4 7h2" stroke="#d33" stroke-width="2"/></symbol>
<symbol id="camundo" viewBox="0 0 24 24"><use href="#cam"/><path d="m2 12 1 9 8-1-3-2c4-3 6 1 5 5 7-7 1-12-7-7z" fill="#ee1c1c"/></symbol>
<symbol id="camredo" viewBox="0 0 24 24"><path d="M2 5h5l2-3h8l1 3h4v14H2z" fill="#ccc" stroke="#aaa"/><circle cx="13" cy="11" r="5" fill="#ddd" stroke="#f4f4f4" stroke-width="2"/><path d="m22 12-1 9-8-1 3-2c-4-3-6 1-5 5-7-7-1-12 7-7z" fill="#bbb"/></symbol>
<symbol id="camcap" viewBox="0 0 24 24"><svg x="3" y="4" width="18" height="17"><use href="#cam"/></svg><path d="M1 6V1h5M18 1h5v5M23 18v5h-5M6 23H1v-5" fill="none" stroke="#888"/></symbol>
<symbol id="campen" viewBox="0 0 24 24"><use href="#cam"/><path d="m11 11 12 11" stroke="#8a6820" stroke-width="5"/><path d="m11 11 12 11" stroke="#e8b838" stroke-width="3"/></symbol>
<symbol id="dash" viewBox="0 0 24 24"><path d="M1 1h22v22H1z" fill="none" stroke="#8c8c8c" stroke-width="1.300" stroke-dasharray="4 3"/></symbol>
<symbol id="sadd" viewBox="0 0 24 24"><use href="#dash"/><path d="M10 6h4v4h4v4h-4v4h-4v-4H6v-4h4z" fill="#8fc870" stroke="#597a48"/></symbol>
<symbol id="ssub" viewBox="0 0 24 24"><use href="#dash"/><path d="M5 9h14v5H5z" fill="#dd2222"/></symbol>
<symbol id="stog" viewBox="0 0 24 24"><use href="#dash"/><path d="M10 3h3v3h3v3h-3v3h-3V9H7V6h3z" fill="#8fc870" stroke="#597a48"/><path d="M5 14h10v4H5z" fill="#dd2222"/><path d="m16 14 7 9" stroke="#777" stroke-width="3"/></symbol>
<symbol id="mag" viewBox="0 0 24 24"><path d="m14 14 8 9" stroke="#777" stroke-width="3"/></symbol>
<symbol id="seltri" viewBox="0 0 24 24"><use href="#dash"/><use href="#mag"/><path d="m11 4 7 14H4z" fill="#8fc870" stroke="#597a48"/></symbol>
<symbol id="selpts" viewBox="0 0 24 24"><use href="#dash"/><use href="#tripts"/></symbol>
<symbol id="tripts" viewBox="0 0 24 24"><use href="#mag"/><path d="m12 4 7 15M12 4 5 18" stroke="#aaa"/><circle cx="12" cy="4" r="2.300" fill="#b4442c"/><circle cx="5" cy="19" r="2.300" fill="#b4442c"/></symbol>
<symbol id="frus" viewBox="0 0 24 24"><use href="#mag"/><path d="m2 9 11-7 9 4v9l-8 3H3z" fill="#8fc870" stroke="#597a48"/><path d="M2 9h11l9-3M13 9v9" fill="none" stroke="#597a48"/></symbol>
<symbol id="fruspt" viewBox="0 0 24 24"><use href="#mag"/><path d="m2 8 9-6 11 3v12l-8 2H3zM2 8h12l8-3M14 8v11" fill="none" stroke="#cc7464" stroke-dasharray="2 2"/></symbol>
<symbol id="poly" viewBox="0 0 24 24"><use href="#mag"/><path d="M3 3 22 2l-4 8 5 8-9 4-9-9z" fill="none" stroke="#999" stroke-dasharray="3 3"/><path d="m3 12 11-6v11z" fill="#8fc870" stroke="#597a48"/></symbol>
<symbol id="polypt" viewBox="0 0 24 24"><use href="#mag"/><path d="M3 3 22 2l-4 8 5 8-9 4-9-9z" fill="none" stroke="#999" stroke-dasharray="3 3"/><g fill="#b4442c"><circle cx="6" cy="5" r="2"/><circle cx="13" cy="7" r="2"/><circle cx="7" cy="11" r="2"/><circle cx="17" cy="11" r="2"/><circle cx="11" cy="15" r="2"/><circle cx="19" cy="4" r="2"/></g></symbol>
<symbol id="blk" viewBox="0 0 24 24"><use href="#dash"/><use href="#mag"/><circle cx="7" cy="7" r="3.500" fill="#2a8fd0"/><circle cx="7" cy="17" r="3.500" fill="#2a8fd0"/><circle cx="16" cy="13" r="4.500" fill="#8fc870" stroke="#597a48"/></symbol>
<symbol id="gbox" viewBox="0 0 24 24"><path d="m3 9 8-7h11l-4 8v13H3z" fill="#b4b4b4" stroke="#8c8c8c"/><path d="M3 9h13l6-7M16 9v14" fill="none" stroke="#888"/><use href="#mag"/></symbol>
<symbol id="dotg" viewBox="0 0 24 24"><circle cx="9" cy="9" r="3.500" fill="#c4c4c4" stroke="#aaa"/><path d="m13 13 7 8" stroke="#aaa" stroke-width="3"/></symbol>
<symbol id="tri" viewBox="0 0 24 24"><use href="#mag"/><path d="m11 4 8 15H3z" fill="#8fc870" stroke="#597a48"/></symbol>
<symbol id="triq" viewBox="0 0 24 24"><path d="m8 11 6 11H1z" fill="#8fc870" stroke="#597a48"/><path d="M13 5q0-4 4-4t5 4q0 3-4 5v5M18 18v2" fill="none" stroke="#666857" stroke-width="2"/></symbol>
<symbol id="ptq" viewBox="0 0 24 24"><circle cx="6" cy="19" r="4" fill="#e03a28"/><path d="M13 5q0-4 4-4t5 4q0 3-4 5v5M18 18v2" fill="none" stroke="#777" stroke-width="2"/></symbol>
<symbol id="plus" viewBox="0 0 24 24"><path d="M9 1h6v8h8v6h-8v8H9v-8H1V9h8z" fill="#a8a8a8"/></symbol>
<symbol id="minus" viewBox="0 0 24 24"><path d="M1 9h22v6H1z" fill="#a8a8a8"/></symbol>
<symbol id="xcirc" viewBox="0 0 24 24"><circle cx="12" cy="12" r="10" fill="#eee" stroke="#999" stroke-width="2.500"/><path d="m8 8 8 8m0-8-8 8" stroke="#999" stroke-width="2.500"/></symbol>
<symbol id="winico" viewBox="0 0 16 15"><path d="M1 1h14v13H1z" fill="#fff" stroke="#333" stroke-width="1.300"/><path d="M0 0h16v4H0z" fill="#333"/></symbol>
<symbol id="float" viewBox="0 0 12 12"><rect x=".5" y=".5" width="11" height="11" rx="2" fill="#f2f2f2" stroke="#666"/><path d="M5 2.500h4.500V7H8M2.500 5H7v4.500H2.500z" fill="none" stroke="#666"/></symbol>
<symbol id="close" viewBox="0 0 12 12"><rect x=".5" y=".5" width="11" height="11" rx="2" fill="#f2f2f2" stroke="#666"/><path d="m3 3 6 6m0-6L3 9" stroke="#555" stroke-width="1.800"/></symbol>
<symbol id="cube" viewBox="0 0 16 16"><path d="m1 3 7-2 7 2v9l-6 3-8-2z" fill="#85c15f"/><path d="m1 3 5 2v10l-5-2z" fill="#5c7b43"/><path d="m1 3 7-2 7 2-9 2z" fill="#74a052"/><path d="m1 3 7-2 7 2v9l-9 3-5-2zM1 3l5 2 9-2M6 5v10" fill="none" stroke="#6b7355"/></symbol>
<symbol id="eyeoff" viewBox="0 0 14 12"><path d="M0 5q6-5 12 0M0 6q6 3 12 0M2 7 1 9M5 8v2M8 8v2M11 7l1 2" fill="none" stroke="#999"/></symbol>
<symbol id="eye" viewBox="0 0 14 12"><path d="M0 6q6-8 13 0-7 8-13 0z" fill="#fff" stroke="#777"/><circle cx="6" cy="6" r="3.800" fill="#2a8bd0"/><circle cx="6" cy="6" r="2" fill="#000"/></symbol>
<symbol id="host" viewBox="0 0 16 16"><path d="M4.500 1.500h7v13h-7z" fill="#888" stroke="#222"/><path d="M5 2h6v3H5z" fill="#ddd"/><path d="M6 4h4M6 7h4" stroke="#111"/></symbol>
<symbol id="noentry" viewBox="0 0 14 14"><circle cx="7" cy="7" r="5.500" fill="none" stroke="#999" stroke-width="2.500"/><path d="m3 11 8-8" stroke="#999" stroke-width="2.500"/></symbol>
<symbol id="redx" viewBox="0 0 14 14"><path d="m2 4 2-2 3 3 3-3 2 2-2 3 2 3-2 2-3-3-3 3-2-2 2-3z" fill="#ee1c24" stroke="#c01018"/></symbol>
<symbol id="gapply" viewBox="0 0 14 14"><path d="m1 6 5-1 3 1v6l-4 2-4-2z" fill="#999"/><path d="M7 2h6v5l-2-1-3 3-2-1 3-4z" fill="#bbb" stroke="#999"/></symbol>
<symbol id="help" viewBox="0 0 14 18"><path d="M3 5q0-4 4-4t4 4q0 2-2 3t-2 4M7 15v2.500" fill="none" stroke="#6f9a58" stroke-width="3.200"/><path d="M3 5q0-4 4-4t4 4q0 2-2 3t-2 4M7 15v2.500" fill="none" stroke="#a2d284" stroke-width="1.800"/></symbol>
<symbol id="gear" viewBox="0 0 16 16"><path d="M6.500 1h3l.5 2 2-1 2 2.500L13 7l2 1-1 3-2 .5V14l-2.500 1L8 13.500 6.500 15 4 14v-2.500L2 11 1 8l2-1-1-2.500L4 2l2 1z" fill="#d0d0d0" stroke="#999"/><circle cx="8" cy="8" r="2.500" fill="#eee" stroke="#999"/></symbol>
<symbol id="refresh" viewBox="0 0 16 16"><path d="M2 7a6 6 0 0 1 10-4M14 9a6 6 0 0 1-10 4" fill="none" stroke="#2a7fa8" stroke-width="2.500"/><path d="M14 1v5H9zM2 15v-5h5z" fill="#2a7fa8"/></symbol>
<symbol id="savepr" viewBox="0 0 16 16"><path d="M2 1h12v14H2z" fill="#3f74c4" stroke="#2d548c"/><path d="M4 2h8v6H4z" fill="#a9c4ea"/><path d="M8 2v7M5 6l3 3 3-3" fill="none" stroke="#fff" stroke-width="1.500"/><path d="M5 12h6v3H5z" fill="#bcd"/></symbol>
<symbol id="heart" viewBox="0 0 16 16"><path d="M1 2h5l1 2h7v9H1z" fill="#f0dc78" stroke="#a89440"/><path d="M9 15q-9-6-5-8 3-1 5 1 2-2 5-1 3 3-5 8z" fill="#e23420"/></symbol>
<symbol id="splitv" viewBox="0 0 16 16"><path d="M1 1h14v14H1z" fill="#cdd5ee" stroke="#999"/><path d="M8 1v14" stroke="#999" stroke-width="1.500"/></symbol>
<symbol id="splith" viewBox="0 0 16 16"><path d="M1 1h14v14H1z" fill="#cdd5ee" stroke="#999"/><path d="M1 8h14" stroke="#999" stroke-width="1.500"/></symbol>
</defs>
</svg>

<header class="menubar">
<nav class="menus">
<button><u>F</u>ile</button><button><u>E</u>dit</button><button><u>V</u>iew</button><button><u>T</u>ools</button><button><u>S</u>ources</button><button>F<u>i</u>lters</button><button><u>M</u>acros</button><button><u>T</u>ools</button><button><u>W</u>indow</button><button>Catalyst</button><button><u>H</u>elp</button>
</nav>
<div class="logo"><div class="words"><b>salome</b><span>MECA</span></div>
<svg class="dots" viewBox="0 0 142 4"><circle cx="28" cy="2" r="2" fill="#ff5a1e"/><path d="M38 0h14v4H38z" fill="#ff8420"/><circle cx="58" cy="2" r="2" fill="#ff8420"/><circle cx="67" cy="2" r="2" fill="#ff8420"/><circle cx="79" cy="2" r="2" fill="#ffae18"/><circle cx="88" cy="2" r="2" fill="#ffae18"/><path d="M94 0h14v4H94z" fill="#ffae18"/><circle cx="114" cy="2" r="2" fill="#ffae18"/></svg></div>
</header>

<div class="toolbar">
<i class="grip first"></i>
<button class="tool wide" aria-label="New"><svg><use href="#new"/></svg></button><button class="tool wide" aria-label="Open"><svg><use href="#open"/></svg></button><button class="tool wide" aria-label="Save"><svg><use href="#save"/></svg></button><i class="sep"></i><button class="tool wide" aria-label="Copy"><svg><use href="#copy"/></svg></button><button class="tool wide" aria-label="Paste"><svg><use href="#paste"/></svg></button>
<i class="grip"></i>
<span class="combo module"><svg class="lead"><use href="#pv"/></svg><select aria-label="Module"><option>ParaViS</option></select></span>
<i class="sep"></i>
<button class="tool wide" aria-label="Shaper"><svg><use href="#shaper"/></svg></button><button class="tool wide" aria-label="Geometry"><svg><use href="#geom"/></svg></button><button class="tool wide" aria-label="Mesh"><svg><use href="#mesh"/></svg></button><button class="tool wide on" aria-label="ParaViS"><svg><use href="#pv"/></svg></button><button class="tool wide" aria-label="Adao"><svg><use href="#adao"/></svg></button><button class="tool wide" aria-label="Persalys"><svg><use href="#pi"/></svg></button><button class="tool wide" aria-label="Europlexus"><svg><use href="#eicon"/></svg></button><button class="tool wide" aria-label="Job manager"><svg><use href="#helmet"/></svg></button><button class="tool wide" aria-label="Signal"><svg><use href="#wave"/></svg></button><button class="tool wide" aria-label="Pipe"><svg><use href="#pipe"/></svg></button><button class="tool wide" aria-label="Meta"><svg><use href="#mt"/></svg></button><button class="tool wide" aria-label="Letter"><svg><use href="#lscript"/></svg></button><button class="tool wide" aria-label="GV"><svg><use href="#gv"/></svg></button><button class="tool wide" aria-label="Bird"><svg><use href="#bird"/></svg></button><button class="tool wide" aria-label="Graph"><svg><use href="#graph"/></svg></button><button class="tool wide" aria-label="Blocks"><svg><use href="#blocks"/></svg></button><button class="tool wide" aria-label="Sphere"><svg><use href="#sphere"/></svg></button><button class="tool wide" aria-label="Eficas"><svg><use href="#eficas"/></svg></button><button class="tool wide" aria-label="Data assimilation"><svg><use href="#da"/></svg></button><button class="tool wide" aria-label="Homard cube"><svg><use href="#gcube"/></svg></button><button class="tool wide" aria-label="Homard"><svg><use href="#lobster"/></svg></button><button class="tool wide" aria-label="Calculator"><svg><use href="#goldcalc"/></svg></button><button class="tool wide" aria-label="Hello"><svg><use href="#redtool"/></svg></button><button class="tool wide" aria-label="PyHello"><svg><use href="#redtool2"/></svg></button><button class="tool wide" aria-label="Charts"><svg><use href="#bars"/></svg></button>
<i class="grip"></i>
<button class="tool" aria-label="Open file"><svg><use href="#folderup"/></svg></button><button class="tool" aria-label="Load state"><svg><use href="#folderdn"/></svg></button><button class="tool" aria-label="Save data"><svg><use href="#savedn"/></svg></button><button class="tool" aria-label="Extract"><svg><use href="#expand"/></svg></button><button class="tool" aria-label="Catalyst"><svg><use href="#vcr"/></svg></button><i class="sep"></i><button class="tool" aria-label="Connect"><svg><use href="#connect"/></svg></button><button class="tool" aria-label="Disconnect"><svg><use href="#disconnect"/></svg></button><button class="tool" aria-label="History"><svg><use href="#clockg"/></svg></button><i class="sep"></i><button class="tool" aria-label="Undo"><svg><use href="#undo"/></svg></button><button class="tool" aria-label="Redo"><svg><use href="#redo"/></svg></button><i class="sep"></i><button class="tool" aria-label="Auto apply"><svg><use href="#gcubearrow"/></svg></button><button class="tool" aria-label="Find data"><svg><use href="#cmapsel"/></svg></button><button class="tool drop" aria-label="Palette"><svg><use href="#palette"/></svg></button>
<i class="grip"></i>
<button class="tool" aria-label="First"><svg><use href="#first"/></svg></button><button class="tool" aria-label="Previous"><svg><use href="#prev"/></svg></button><button class="tool" aria-label="Reverse"><svg><use href="#rev"/></svg></button><button class="tool" aria-label="Play"><svg><use href="#play"/></svg></button><button class="tool" aria-label="Next"><svg><use href="#next"/></svg></button><button class="tool" aria-label="Last"><svg><use href="#last"/></svg></button><button class="tool" aria-label="Loop"><svg><use href="#loop"/></svg></button>
<i class="grip"></i>
<label class="small" for="time">Time:</label><input id="time" class="field time" value="0"><span class="spin"><input aria-label="Time step" value="0" disabled><span class="arrows"><i class="up"></i><i class="down"></i></span></span>
</div>

<div class="toolbar">
<i class="grip first"></i>
<button class="tool on" aria-label="Color legend"><svg><use href="#cbar"/></svg></button><button class="tool" aria-label="Edit color map"><svg><use href="#cedit"/></svg></button><button class="tool" aria-label="Separate color map"><svg><use href="#cunlink"/></svg></button><button class="tool" aria-label="Rescale to data"><svg><use href="#rng"/></svg></button><button class="tool" aria-label="Rescale custom"><svg><use href="#rngc"/></svg></button><button class="tool" aria-label="Rescale over time"><svg><use href="#rngt"/></svg></button><button class="tool" aria-label="Rescale visible"><svg><use href="#rnge"/></svg></button>
<span class="combo array"><i class="point"></i><select aria-label="Color array"><option>CUT_DEPL_DZ</option></select></span>
<span class="combo comp off"><select aria-label="Component" disabled><option></option></select></span>
<i class="grip"></i>
<span class="combo repr"><select aria-label="Representation"><option>Wireframe</option></select></span>
<i class="grip"></i>
<button class="tool" aria-label="Reset camera"><svg><use href="#zoomall"/></svg></button><button class="tool" aria-label="Zoom to data"><svg><use href="#zoomdata"/></svg></button><button class="tool" aria-label="Reset closest"><svg><use href="#zoomcirc"/></svg></button><button class="tool" aria-label="Zoom closest"><svg><use href="#zoomsq"/></svg></button><button class="tool" aria-label="Zoom to box"><svg><use href="#zoombox"/></svg></button><button class="tool axis"><svg><use href="#upL"/></svg><span class="l">+X</span></button><button class="tool axis"><svg><use href="#upR"/></svg><span class="r">-X</span></button><button class="tool axis"><svg><use href="#upRy"/></svg><span class="r">+Y</span></button><button class="tool axis"><svg><use href="#upLy"/></svg><span class="l">-Y</span></button><button class="tool axis"><svg><use href="#upLz"/></svg><span class="l">+Z</span></button><button class="tool axis"><svg><use href="#upRz"/></svg><span class="r">-Z</span></button><button class="tool" aria-label="Isometric"><svg><use href="#iso"/></svg></button><button class="tool axis"><svg><use href="#rotp"/></svg><span class="r b">+90</span></button><button class="tool axis"><svg><use href="#rotm"/></svg><span class="l b">-90</span></button>
<i class="grip"></i>
<button class="tool on" aria-label="Show orientation axes"><svg><use href="#axesv"/></svg></button><button class="tool" aria-label="Show center"><svg><use href="#rot1"/></svg></button><button class="tool" aria-label="Reset center"><svg><use href="#rot2"/></svg></button><button class="tool" aria-label="Pick center"><svg><use href="#rot3"/></svg></button>
<i class="grip"></i>
<span class="macros"><button>annotate_groups</button><button>rosetteCustomViews</button><button>ShowSalomeObject</button><button>macr_lign_coupe</button></span>
</div>

<div class="toolbar bottom">
<i class="grip first"></i>
<button class="tool" aria-label="Calculator"><svg><use href="#calc"/></svg></button><button class="tool" aria-label="Contour"><svg><use href="#contour"/></svg></button><button class="tool" aria-label="Clip"><svg><use href="#clip"/></svg></button><button class="tool" aria-label="Slice"><svg><use href="#slice"/></svg></button><button class="tool" aria-label="Threshold"><svg><use href="#thresh"/></svg></button><button class="tool" aria-label="Extract subset"><svg><use href="#gcube2"/></svg></button><button class="tool" aria-label="Glyph"><svg><use href="#glyph"/></svg></button><button class="tool" aria-label="Stream tracer"><svg><use href="#stream"/></svg></button><button class="tool" aria-label="Warp"><svg><use href="#warp"/></svg></button><button class="tool" aria-label="Group"><svg><use href="#group"/></svg></button><button class="tool" aria-label="Extract level"><svg><use href="#level"/></svg></button>
<i class="grip"></i>
<button class="tool" aria-label="Convert"><svg><use href="#ba"/></svg></button><button class="tool" aria-label="Ellipse"><svg><use href="#ell"/></svg></button><button class="tool" aria-label="Extract selection"><svg><use href="#squares"/></svg></button><button class="tool" aria-label="Plot global"><svg><use href="#tplot"/></svg></button><button class="tool" aria-label="Plot over line"><svg><use href="#pline"/></svg></button><button class="tool" aria-label="Plot selection"><svg><use href="#tplot2"/></svg></button><button class="tool" aria-label="Freeze selection"><svg><use href="#frost"/></svg></button>
<i class="grip"></i>
<button class="tool" aria-label="Ruler"><svg><use href="#ruler"/></svg></button>
</div>

<div class="workspace">
<aside class="dock">
<div class="docktitle"><span>Pipeline Browser</span><button aria-label="Float"><svg><use href="#float"/></svg></button><button aria-label="Close"><svg><use href="#close"/></svg></button></div>
<ul class="tree">
<li class="small"><span class="vis"></span><svg class="node"><use href="#host"/></svg><span>builtin:</span></li>
<li class="small"><svg class="vis"><use href="#eyeoff"/></svg><svg class="node"><use href="#cube"/></svg><span>tmpcyza3hjw.med</span></li>
<li class="small"><svg class="vis"><use href="#eyeoff"/></svg><svg class="node"><use href="#cube"/></svg><span>ExtractGroup1</span></li>
<li><svg class="vis"><use href="#eyeoff"/></svg><i class="tee"></i><svg class="node"><use href="#cube"/></svg><span>LINES</span></li>
<li><svg class="vis"><use href="#eyeoff"/></svg><i class="tee"></i><svg class="node"><use href="#cube"/></svg><span>POINTS</span></li>
<li><svg class="vis"><use href="#eyeoff"/></svg><i class="tee end box"></i><svg class="node"><use href="#cube"/></svg><span>SET GLYPH SIZE</span></li>
<li><svg class="vis"><use href="#eyeoff"/></svg><i class="gap"></i><i class="tee"></i><svg class="node"><use href="#cube"/></svg><span>CUT_AXE_X</span></li>
<li><svg class="vis"><use href="#eyeoff"/></svg><i class="gap"></i><i class="tee"></i><svg class="node"><use href="#cube"/></svg><span>CUT_AXE_Y</span></li>
<li><svg class="vis"><use href="#eyeoff"/></svg><i class="gap"></i><i class="tee"></i><svg class="node"><use href="#cube"/></svg><span>CUT_AXE_Z</span></li>
<li><svg class="vis"><use href="#eyeoff"/></svg><i class="gap"></i><i class="tee"></i><svg class="node"><use href="#cube"/></svg><span>CUT_DEPL_DX</span></li>
<li><svg class="vis"><use href="#eyeoff"/></svg><i class="gap"></i><i class="tee"></i><svg class="node"><use href="#cube"/></svg><span>CUT_DEPL_DY</span></li>
<li><svg class="vis"><use href="#eye"/></svg><div class="sel"><i class="gap"></i><i class="tee"></i><svg class="node"><use href="#cube"/></svg><span>CUT_DEPL_DZ</span></div></li>
<li><svg class="vis"><use href="#eyeoff"/></svg><i class="gap"></i><i class="tee"></i><svg class="node"><use href="#cube"/></svg><span>CUT_DEPL_DRX</span></li>
<li><svg class="vis"><use href="#eyeoff"/></svg><i class="gap"></i><i class="tee"></i><svg class="node"><use href="#cube"/></svg><span>CUT_DEPL_DRY</span></li>
<li><svg class="vis"><use href="#eyeoff"/></svg><i class="gap"></i><i class="tee end"></i><svg class="node"><use href="#cube"/></svg><span>CUT_DEPL_DRZ</span></li>
</ul>
<div class="splitter"></div>
<div class="tabs"><button class="tab current">Properties</button><button class="tab">Information</button></div>
<div class="docktitle props"><span>Properties</span><button aria-label="Float"><svg><use href="#float"/></svg></button><button aria-label="Close"><svg><use href="#close"/></svg></button></div>
<div class="actions"><button class="btn" disabled><svg><use href="#gapply"/></svg>Apply</button><button class="btn" disabled><svg><use href="#noentry"/></svg>Reset</button><button class="btn"><svg><use href="#redx"/></svg>Delete</button><button class="btn low" aria-label="Help"><svg><use href="#help"/></svg></button></div>
<div class="search"><input class="field" aria-label="Search" placeholder="Search ... (use Esc to clear text)"><button class="btn sunk" aria-label="Advanced"><svg><use href="#gear"/></svg></button></div>
<div class="scroller">
<div class="form">
<div class="section"><button class="group"><i class="dashmark"></i>Properties (CUT_DEPL_DZ</button><button class="btn sq" aria-label="Copy"><svg class="dim"><use href="#copy"/></svg></button><button class="btn sq" aria-label="Paste" disabled><svg class="dim"><use href="#paste"/></svg></button><button class="btn sq" aria-label="Refresh"><svg><use href="#refresh"/></svg></button><button class="btn sq" aria-label="Save"><svg><use href="#savepr"/></svg></button></div>
<div class="row"><label for="attr">Attribute Type</label><span class="combo"><i class="point"></i><select id="attr"><option>Point Data</option></select></span></div>
<div class="checks">
<label class="check"><input type="checkbox">Coordinate Results</label>
<label class="check"><input type="checkbox">Result Normals</label>
<label class="check"><input type="checkbox">Result TCoords</label>
</div>
<div class="row name"><label for="res">Result Array Name</label><input id="res" class="field" value="CUT_DEPL_DZ"></div>
<input class="field expr" aria-label="Expression" value="CUT_DEPL_DZ">
<div class="mini"><button class="btn drop" aria-label="Favourites"><svg><use href="#heart"/></svg></button><button class="btn" aria-label="Load"><svg><use href="#folderdn"/></svg></button><button class="btn" aria-label="Settings"><svg><use href="#gear"/></svg></button></div>
<div class="keys">
<button class="btn">Clear</button><button class="btn">(</button><button class="btn">)</button><button class="btn">iHat</button><button class="btn">jHat</button><button class="btn">kHat</button>
<button class="btn">sin</button><button class="btn">cos</button><button class="btn">tan</button><button class="btn">abs</button><button class="btn">sqrt</button><button class="btn">+</button>
<button class="btn">asin</button><button class="btn">acos</button><button class="btn">atan</button><button class="btn">ceil</button><button class="btn">floor</button><button class="btn">-</button>
<button class="btn">sinh</button><button class="btn">cosh</button><button class="btn">tanh</button><button class="btn">x^y</button><button class="btn">exp</button><button class="btn">*</button>
<button class="btn">dot</button><button class="btn">mag</button><button class="btn">norm</button><button class="btn">ln</button><button class="btn">log10</button><button class="btn">/</button>
<button class="btn half drop">Scalars</button><button class="btn half drop">Vectors</button>
</div>
</div>
<div class="bar"><span class="end"><i class="up"></i></span><span class="thumb"></span><span class="end bottom"><i class="down"></i></span></div>
</div>
</aside>

<main class="main">
<div class="subhead"><h1>ParaView scene:1 - viewer:1</h1><button class="btn" aria-label="Close viewer"><svg><use href="#close"/></svg></button></div>
<div class="layouts"><button class="ltab current"><svg class="win"><use href="#winico"/></svg>Layout #1<svg class="x"><use href="#close"/></svg></button><button class="ltab">+</button></div>
<div class="viewbar">
<button class="vt"><svg><use href="#camundo"/></svg></button><button class="vt"><svg><use href="#camredo"/></svg></button><i class="sep"></i><button class="vt"><svg><use href="#camcap"/></svg></button><i class="sep"></i><button class="vt txt">2D</button><button class="vt"><svg><use href="#campen"/></svg></button><i class="sep"></i><button class="vt"><svg><use href="#sadd"/></svg></button><button class="vt"><svg><use href="#ssub"/></svg></button><button class="vt"><svg><use href="#stog"/></svg></button><i class="sep"></i><button class="vt"><svg><use href="#seltri"/></svg></button><button class="vt"><svg><use href="#selpts"/></svg></button><button class="vt"><svg><use href="#frus"/></svg></button><button class="vt"><svg><use href="#fruspt"/></svg></button><button class="vt"><svg><use href="#poly"/></svg></button><button class="vt"><svg><use href="#polypt"/></svg></button><button class="vt"><svg><use href="#blk"/></svg></button><button class="vt"><svg><use href="#gbox"/></svg></button><button class="vt"><svg><use href="#dotg"/></svg></button><button class="vt"><svg><use href="#tri"/></svg></button><button class="vt"><svg><use href="#tripts"/></svg></button><button class="vt"><svg><use href="#triq"/></svg></button><button class="vt"><svg><use href="#ptq"/></svg></button><button class="vt"><svg><use href="#plus"/></svg></button><button class="vt"><svg><use href="#minus"/></svg></button><button class="vt"><svg><use href="#xcirc"/></svg></button>
<b class="vname">RenderView1</b>
<button class="btn vb"><svg><use href="#splitv"/></svg></button><button class="btn vb"><svg><use href="#splith"/></svg></button><button class="btn vb"><svg class="max" viewBox="0 0 18 18"><path d="M1 1h16v16H1z" fill="#fff" stroke="#333" stroke-width="2"/><path d="M0 0h18v5H0z" fill="#333"/></svg></button><button class="btn vb cut"><svg class="xs"><use href="#close"/></svg></button>
</div>
<div class="view">
<div class="beam"><i class="c1"></i><i class="c2"></i><i class="c3"></i><i class="c4"></i><i class="c5"></i><i class="c6"></i><i class="c7"></i><i class="c8"></i><i class="c9"></i><i class="c10"></i><i class="c11"></i><i class="c12"></i></div>
<svg class="triad" viewBox="0 0 100 100"><path d="M19 80V19" stroke="#ff0"/><path d="M19 80h62" stroke="#f33" stroke-width="1.200"/><path d="m19 5 5 13q-5 3-10 0z" fill="#dede00" stroke="#770" stroke-width=".5"/><path d="M14 18q5 3 10 0v1q-5 2-10 0z" fill="#222"/><path d="M80 75v11l16-5z" fill="#e80000" stroke="#400" stroke-width=".5"/><path d="M19 80h18" stroke="#000" stroke-width="2"/><circle cx="19" cy="80" r="7" fill="#006400"/><path d="m22 3 7 9 7-9M29 12v8M24 63h13L25 80M84 64l12 17M96 64 84 81" fill="none" stroke="#000" stroke-width="2"/></svg>
<div class="legend">
<ol class="labels"><li class="ext">2.3e+01</li><li>23.1</li><li>22.8</li><li>22.6</li><li>22.4</li><li>22.1</li><li>21.9</li><li>21.7</li><li>21.4</li><li>21.2</li><li>21.0</li><li>20.7</li><li class="ext">2.1e+01</li></ol>
<div class="swatches"><i></i><i></i><i></i><i></i><i></i><i></i><i></i><i></i><i></i><i></i><i></i><i></i></div>
<span class="ltitle">CUT_DEPL_DZ</span>
</div>
</div>
</main>
</div>
</body>
</html>
```
FILE: styles.css
```css
* { box-sizing: border-box; }
html, body { height: 100%; margin: 0; }
body { display: flex; flex-direction: column; overflow: hidden; background: #efefef; color: #000; font: 15px/20px "Noto Sans", sans-serif; }
button, input, select { font: inherit; color: inherit; margin: 0; padding: 0; border: 0; background: none; border-radius: 0; }
button { white-space: nowrap; }
ul, ol { list-style: none; margin: 0; padding: 0; }
svg { display: block; flex: none; }
i { display: block; flex: none; }
.defs { position: absolute; width: 0; height: 0; }
.small { font-size: 14px; }

/* menu bar */
.menubar { display: flex; justify-content: space-between; height: 28px; flex: none; }
.menus { display: flex; gap: 8px; height: 22px; font-size: 14px; }
.menus button { padding: 0 5px 2px 4px; border-bottom: 1px solid #d4d4d4; line-height: 18px; }
.menus u { text-underline-offset: 2px; }
.logo { width: 142px; color: #1d55c4; }
.words { display: flex; align-items: baseline; gap: 12px; height: 23px; line-height: 20px; }
.words b { font-size: 23px; }
.words span { font-size: 17px; }
.dots { width: 142px; height: 4px; }

/* toolbars */
.toolbar { display: flex; align-items: center; height: 39px; flex: none; border-top: 1px solid #b2b2b2; background: linear-gradient(#f9f9f9, #ececec); }
.toolbar.bottom { height: 38px; }
.grip { width: 17px; height: 22px; background: radial-gradient(circle, #aaa 1px, transparent 1px) 0 0 / 3px 4px; background-clip: content-box; padding: 0 3px 0 8px; }
.grip.first { width: 7px; padding: 0 4px 0 0; }
.sep { width: 6px; height: 22px; background: linear-gradient(#cfcfcf, #cfcfcf) 3px 0 / 1px 100% no-repeat; }
.tool { position: relative; display: flex; align-items: center; justify-content: center; width: 32px; height: 31px; flex: none; border: 1px solid transparent; border-radius: 3px; }
.tool.wide { width: 33px; }
.tool svg { width: 23px; height: 23px; overflow: visible; }
.tool.on { background: #dadada; border-color: #a8a8a8; }
.tool.drop::after { content: ""; position: absolute; right: 2px; bottom: 2px; border: 3px solid transparent; border-top: 4px solid #444; border-bottom: 0; }
.tool.axis span { position: absolute; top: 3px; font-size: 10px; line-height: 12px; color: #555; }
.tool.axis .l { left: 4px; }
.tool.axis .r { right: 3px; }
.tool.axis .b { top: 18px; font-size: 9px; }
.combo { position: relative; display: block; height: 27px; flex: none; }
.combo select { appearance: none; width: 100%; height: 27px; padding: 0 8px 2px 4px; border: 1px solid #ababab; border-radius: 3px; background: linear-gradient(#fefefe, #ededed); }
.combo::after { content: ""; position: absolute; right: 7px; top: 11px; border: 4px solid transparent; border-top: 5px solid #555; border-bottom: 0; }
.combo.off select { border-color: #c4c4c4; opacity: 1; }
.combo.off::after { border-top-color: #ccc; }
.combo .lead { position: absolute; left: 6px; top: 6px; width: 15px; height: 15px; }
.point { position: absolute; left: 11px; top: 11px; width: 5px; height: 5px; background: #f4bb1c; border: 1px solid #a8935c; border-radius: 1px; }
.module { width: 162px; }
.module select { padding-left: 24px; }
.array { width: 181px; margin-right: 5px; }
.array select { padding-left: 24px; }
.comp { width: 79px; }
.repr { width: 183px; }
.repr select { font-size: 14px; }
.field { height: 27px; padding: 0 3px 2px; border: 1px solid #ababab; border-radius: 3px; background: #fff; }
.time { width: 125px; margin: 0 3px 0 4px; }
.spin { display: flex; width: 37px; height: 26px; border: 1px solid #b4b4b4; border-radius: 3px; background: #f0f0f0; }
.spin input { width: 22px; padding: 0 0 0 5px; border-right: 1px solid #b4b4b4; color: #bbb; }
.arrows { display: flex; flex-direction: column; align-items: center; justify-content: space-evenly; flex: 1; background: #f8f8f8; }
.up, .down { border: 4px solid transparent; }
.up { border-top: 0; border-bottom: 4px solid #d0d0d0; }
.down { border-bottom: 0; border-top: 4px solid #d0d0d0; }
.macros { display: flex; gap: 3px; font-size: 14px; }
.macros button { padding: 0 8px; }

/* workspace */
.workspace { display: flex; flex: 1; min-height: 0; border-top: 1px solid #b2b2b2; }
.dock { display: flex; flex-direction: column; width: 385px; flex: none; padding-right: 7px; }
.docktitle { display: flex; align-items: center; gap: 2px; height: 22px; flex: none; padding-right: 1px; font-size: 14px; }
.docktitle span { flex: 1; text-indent: -1px; }
.docktitle svg { width: 11px; height: 11px; }
.docktitle button { width: 12px; }
.tree { flex: 1 1 0; min-height: 200px; padding-top: 2px; background: #fff; border: 1px solid #b0b0b0; border-left: 0; overflow: hidden; }
.tree li { display: flex; align-items: center; height: 23px; line-height: 23px; }
.vis { width: 20px; height: 12px; flex: none; padding-right: 6px; }
.node { width: 16px; height: 16px; margin: 0 3px 0 1px; }
.gap { width: 18px; }
.tee { position: relative; width: 18px; height: 23px; background: linear-gradient(#888, #888) 9px 0 / 1px 100% no-repeat, linear-gradient(#888, #888) 100% 11px / 9px 1px no-repeat; }
.tee.end { background-size: 1px 12px, 9px 1px; }
.tee.box::after { content: ""; position: absolute; left: 5px; top: 7px; width: 9px; height: 9px; border: 1px solid #888; background: linear-gradient(#000, #000) 50% 50% / 5px 1px no-repeat #fff; }
.sel { display: flex; align-items: center; height: 19px; padding-right: 4px; background: #308cc6; color: #fff; }
.sel .node { opacity: .75; }
.splitter { height: 7px; flex: none; background: radial-gradient(circle, #aaa 1px, transparent 1px) 50% 50% / 3px 4px; background-clip: content-box; padding: 2px 182px 1px 178px; }
.tabs { display: flex; align-items: flex-end; height: 30px; flex: none; border-bottom: 1px solid #b0b0b0; font-size: 14px; }
.tab { height: 28px; padding: 0 11px; margin-right: -1px; background: #dcdcdc; border: 1px solid #b0b0b0; border-bottom: 0; }
.tab.current { height: 30px; margin-bottom: -1px; padding: 0 13px 0 7px; background: linear-gradient(#fbfbfb, #efefef); border-left: 0; border-radius: 0 2px 0 0; }
.docktitle.props { height: 23px; margin-bottom: 8px; }
.btn { display: flex; align-items: center; justify-content: center; gap: 4px; height: 27px; padding: 0 0 1px; border: 1px solid #ababab; border-radius: 3px; background: linear-gradient(#fefefe, #ededed); }
.btn:disabled { color: #b4b4b4; border-color: #c4c4c4; }
.actions { display: grid; grid-template-columns: repeat(4, 1fr); gap: 3px; padding: 0 9px 0 3px; flex: none; }
.actions .btn svg { width: 14px; height: 14px; }
.actions .low { height: 25px; margin-top: 1px; }
.search { display: flex; align-items: center; gap: 3px; padding: 6px 9px 6px 3px; flex: none; }
.search .field { flex: 1; min-width: 0; }
.search .field::placeholder { color: #808080; }
.sunk { width: 24px; height: 23px; background: #dcdcdc; }
.sunk svg { width: 15px; height: 15px; }
.scroller { display: flex; height: 389px; flex: none; padding-right: 9px; overflow: hidden; }
.form { flex: 1; padding-left: 3px; min-width: 0; }
.section { display: flex; align-items: center; gap: 4px; height: 28px; margin-bottom: 7px; }
.group { display: flex; align-items: center; gap: 7px; flex: 1; height: 28px; padding-left: 10px; border: 1px solid #b4b4b4; font-weight: bold; overflow: hidden; }
.dashmark { width: 13px; height: 5px; background: #308fc8; border: 1px solid #a0a0a0; }
.sq { width: 28px; height: 24px; }
.sq svg { width: 16px; height: 16px; }
.dim { opacity: .65; }
.row { display: grid; grid-template-columns: 133px 1fr; align-items: center; height: 27px; }
.row label { font-size: 14px; }
.row select { padding-left: 22px; }
.row.name { margin-bottom: 4px; }
.checks { padding: 2px 0 1px; font-size: 14px; }
.check { display: flex; align-items: center; gap: 5px; height: 29px; }
.check input { appearance: none; width: 14px; height: 14px; border: 1px solid #b4b4b4; background: #fff; }
.expr { display: block; width: 100%; height: 29px; border-radius: 0; padding-left: 5px; }
.mini { display: flex; justify-content: flex-end; gap: 1px; height: 24px; }
.mini .btn { position: relative; width: 23px; height: 23px; }
.mini svg { width: 15px; height: 15px; }
.btn.drop::after { content: ""; border: 3px solid transparent; border-top: 4px solid #555; border-bottom: 0; }
.mini .drop::after { position: absolute; right: 1px; bottom: 4px; }
.keys { display: grid; grid-template-columns: repeat(6, 1fr); grid-auto-rows: 26px; }
.keys .btn { height: 26px; }
.keys .half { grid-column: span 3; position: relative; padding-right: 12px; }
.keys .half::after { position: absolute; right: 4px; top: 11px; }
.bar { display: flex; flex-direction: column; width: 14px; flex: none; background: #e4e4e4; border-left: 1px solid #b8b8b8; }
.bar .end { display: flex; align-items: center; justify-content: center; height: 14px; background: #f6f6f6; border-bottom: 1px solid #b8b8b8; }
.bar .up { border-bottom-color: #555; }
.bar .down { border-top-color: #555; }
.bar .bottom { margin-top: auto; border: 0; border-top: 1px solid #b8b8b8; }
.thumb { height: 47px; background: linear-gradient(90deg, #fcfcfc, #f0f0f0); border-bottom: 1px solid #b8b8b8; }

/* view area */
.main { display: flex; flex-direction: column; flex: 1; min-width: 0; margin-top: 1px; padding: 1px 0 0 1px; border-top: 2px solid #a0a09e; border-left: 2px solid #a0a09e; }
.subhead { display: flex; height: 31px; flex: none; overflow: hidden; }
.subhead h1 { flex: 1; margin: 0 7px 0 0; border: 1px solid #aaa; border-bottom: 0; border-radius: 4px 4px 0 0; background: linear-gradient(#f9f9f9, #efefef); color: #308cc6; font-size: 14px; font-weight: normal; line-height: 28px; text-align: center; }
.subhead .btn { width: 17px; height: 17px; margin: 7px -4px 0 0; }
.subhead svg { width: 11px; height: 11px; }
.layouts { display: flex; align-items: flex-end; height: 30px; flex: none; border-bottom: 1px solid #aaa; font-size: 14px; }
.ltab { width: 33px; height: 28px; background: #e4e4e4; border: 1px solid #bbb; border-left: 0; border-bottom: 0; border-radius: 0 3px 0 0; }
.ltab.current { display: flex; align-items: center; gap: 5px; width: 123px; height: 30px; margin-bottom: -1px; padding: 0 0 0 10px; background: #fcfcfc; border: 1px solid #aaa; border-bottom: 0; border-radius: 3px 3px 0 0; }
.ltab .win { width: 16px; height: 15px; }
.ltab .x { width: 11px; height: 11px; margin-left: -1px; }
.viewbar { display: flex; align-items: center; height: 27px; flex: none; overflow: hidden; }
.vt { display: flex; align-items: center; justify-content: center; width: 26px; height: 24px; flex: none; }
.vt svg { width: 16px; height: 16px; overflow: visible; }
.txt { font-size: 12px; font-weight: bold; color: #66644c; }
.vname { margin: 0 11px 0 auto; border-bottom: 1px solid #000; font-size: 14px; line-height: 18px; }
.vb { width: 26px; height: 25px; flex: none; margin-right: 1px; }
.vb svg { width: 15px; height: 15px; }
.vb .max { width: 18px; height: 18px; }
.vb .xs { width: 11px; height: 11px; }
.vb.cut { margin-right: -2px; }
.view { position: relative; display: flex; flex: 1; flex-direction: column; align-items: center; min-height: 0; margin-left: 1px; padding: 96px 0 94px; border: solid #0000f0; border-width: 2px 0 0 2px; background: #fff; }
.beam { display: flex; flex-direction: column; flex: 1; width: 10px; border-radius: 2px; overflow: hidden; }
.beam i { flex: 1; box-shadow: inset 2px 0 1px #0003, inset -1px 0 1px #0002; }
.c1 { background: #5c0202; } .c2 { background: #911a03; } .c3 { background: #b33c0e; }
.c4 { background: #c26d22; } .c5 { background: #b99b2f; } .c6 { background: #93b52a; }
.c7 { background: #60c143; } .c8 { background: #21b47b; } .c9 { background: #1c97a3; }
.c10 { background: #366dc0; } .c11 { background: #343f96; } .c12 { background: #240e2b; }
.triad { position: absolute; left: 119px; bottom: 116px; width: 100px; height: 100px; }
.legend { position: absolute; top: 3px; right: 9px; display: flex; height: calc(70% + 20px); font-family: Lato, sans-serif; font-size: 16px; }
.labels { display: flex; flex-direction: column; justify-content: space-between; }
.labels li { display: flex; align-items: center; justify-content: flex-end; gap: 7px; }
.labels li::after { content: ""; width: 8px; height: 1px; background: #000; }
.labels .ext { gap: 1px; }
.swatches { display: grid; grid-auto-rows: 1fr; width: 16px; margin: 10px 4px 10px -1px; }
.swatches i:nth-child(1) { background: #7a0403; } .swatches i:nth-child(2) { background: #be2102; }
.swatches i:nth-child(3) { background: #ea4f0d; } .swatches i:nth-child(4) { background: #fe922a; }
.swatches i:nth-child(5) { background: #f1cb3a; } .swatches i:nth-child(6) { background: #c1f334; }
.swatches i:nth-child(7) { background: #7dff56; } .swatches i:nth-child(8) { background: #29efa2; }
.swatches i:nth-child(9) { background: #22c5e2; } .swatches i:nth-child(10) { background: #4490fe; }
.swatches i:nth-child(11) { background: #4454c4; } .swatches i:nth-child(12) { background: #30123b; }
.ltitle { align-self: center; writing-mode: vertical-rl; transform: rotate(180deg); line-height: 15px; }
```
